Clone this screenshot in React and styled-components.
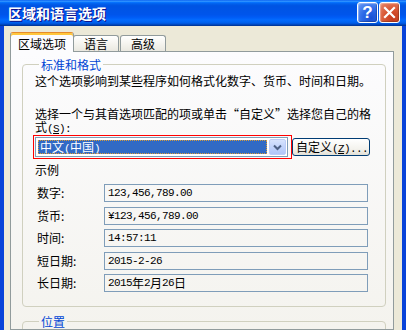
import React from "react";
import styled, { createGlobalStyle } from "styled-components";

const GlobalStyle = createGlobalStyle`
  html, body { margin: 0; padding: 0; background: #ECE9D8; }
  body {
    font-family: "Noto Sans CJK SC", "Noto Sans", sans-serif;
    font-size: 12px;
    color: #000;
  }
  #root { width: 406px; height: 330px; overflow: hidden; }
  * { box-sizing: border-box; }
`;

const Window = styled.div`
  width: 406px;
  height: 330px;
  display: flex;
  flex-direction: column;
  overflow: hidden;
`;

const TitleBar = styled.div`
  height: 26px;
  flex: none;
  display: flex;
  align-items: center;
  padding: 0 6px 0 8px;
  background: linear-gradient(
    180deg,
    #0058ee 0%,
    #3593ff 4%,
    #288eff 6%,
    #127dff 8%,
    #036ffc 10%,
    #0262ee 14%,
    #0057e5 20%,
    #0054e3 24%,
    #0055eb 56%,
    #005bf5 66%,
    #026afe 76%,
    #0062ef 86%,
    #0052d6 92%,
    #0040ab 96%,
    #003092 100%
  );
`;

const Title = styled.div`
  flex: 1;
  color: #fff;
  font-weight: bold;
  font-size: 14px;
  line-height: 16px;
  text-shadow: 1px 1px #0f1089;
`;

const Controls = styled.div`
  display: flex;
  gap: 1px;
  align-self: flex-start;
  margin-top: 2px;
`;

const CtrlButton = styled.div`
  width: 21px;
  height: 21px;
  border: 1px solid #fff;
  border-radius: 3px;
  display: flex;
  align-items: center;
  justify-content: center;
  color: #fff;
  font-family: "Liberation Sans", sans-serif;
  font-weight: bold;
  font-size: 17px;
  line-height: 1;
  background: ${(p) =>
    p.$close
      ? "radial-gradient(circle at 70% 80%, #c4391b 0%, #d85634 45%, #e88a6e 100%)"
      : "radial-gradient(circle at 70% 80%, #1a4fd3 0%, #2d6ae8 45%, #6d9ef5 100%)"};
  box-shadow: inset -1px -1px 1px rgba(0, 0, 0, 0.25),
    inset 1px 1px 1px rgba(255, 255, 255, 0.35);
`;

const Frame = styled.div`
  flex: 1;
  min-height: 0;
  display: flex;
  flex-direction: column;
  background: #ece9d8;
  border-left: 4px solid #0843d9;
  border-right: 4px solid #0843d9;
  padding: 6px 8px 0 6px;
`;

const TabStrip = styled.div`
  display: flex;
  align-items: flex-end;
  gap: 1px;
  height: 19px;
  position: relative;
  z-index: 1;
`;

const Tab = styled.div`
  height: ${(p) => (p.$active ? "20px" : "16px")};
  margin-bottom: ${(p) => (p.$active ? "-1px" : "0")};
  margin-right: ${(p) => (p.$active ? "-2px" : "0")};
  padding: ${(p) => (p.$active ? "4px 7px 0" : "1px 10px 0")};
  line-height: 14px;
  border: 1px solid #919b9c;
  border-bottom: none;
  border-radius: 3px 3px 0 0;
  white-space: nowrap;
  background: ${(p) =>
    p.$active ? "#fcfcfe" : "linear-gradient(180deg, #ffffff 0%, #f3f2ec 60%, #eae8e0 100%)"};
  ${(p) =>
    p.$active &&
    `border-top-color: #e68b2c; box-shadow: inset 0 2px 0 #ffc73c;`}
`;

const Panel = styled.div`
  flex: 1;
  min-height: 0;
  border: 1px solid #919b9c;
  background: linear-gradient(180deg, #fcfcfe 0%, #f4f3ee 100%);
  padding: 6px 7px 0 11px;
  overflow: hidden;
`;

const Group = styled.fieldset`
  margin: ${(p) => (p.$second ? "8px 0 0" : "0")};
  min-width: 0;
  border: 1px solid #d0d0bf;
  border-radius: 4px;
  padding: 3px 12px 14px 12px;
  ${(p) => p.$second && "height: 60px;"}
`;

const Legend = styled.legend`
  padding: 0 2px;
  margin-left: 4px;
  color: #0046d5;
  line-height: 13px;
`;

const Para = styled.div`
  line-height: ${(p) => (p.$tight ? "13px" : "14px")};
  margin-top: ${(p) => p.$mt || 0}px;
  white-space: nowrap;
`;

const Num = styled.span`
  font-family: "Liberation Mono", monospace;
  font-size: 11px;
  line-height: 1;
  letter-spacing: -0.6px;
`;

const Key = styled.span`
  text-decoration: underline;
`;

const ComboRow = styled.div`
  display: flex;
  align-items: center;
`;

const Highlight = styled.div`
  margin-left: -2px;
  border: 1px solid #f00;
  padding: 1px 3px 1px 1px;
`;

const Combo = styled.div`
  width: 253px;
  height: 20px;
  border: 1px solid #7f9db9;
  background: #fff;
  display: flex;
  align-items: center;
  padding: 1px;
  gap: 2px;
`;

const Selection = styled.div`
  flex: 1;
  height: 14px;
  margin-left: 1px;
  background: #316ac5;
  color: #fff;
  line-height: 13px;
  padding-left: 2px;
  outline: 1px dotted #d89c3a;
  outline-offset: -1px;
`;

const DropButton = styled.div`
  width: 17px;
  height: 16px;
  border: 1px solid #bccdf9;
  border-radius: 2px;
  background: linear-gradient(180deg, #d7e3fd 0%, #c1d3fb 50%, #b1c6f8 100%);
  display: flex;
  align-items: center;
  justify-content: center;
`;

const PushButton = styled.div`
  width: 78px;
  height: 18px;
  border: 1px solid #003c74;
  border-radius: 3px;
  background: linear-gradient(180deg, #ffffff 0%, #f4f3ee 60%, #e3e0d6 100%);
  line-height: 16px;
  padding-left: 3px;
  white-space: nowrap;
  overflow: hidden;
`;

const Rows = styled.div`
  margin-top: 7px;
  display: flex;
  flex-direction: column;
  gap: 4px;
  & > :nth-child(even) {
    margin-top: 1px;
  }
`;

const Row = styled.div`
  display: grid;
  grid-template-columns: 69px 264px;
  align-items: center;
`;

const Label = styled.div`
  padding-left: 2px;
  line-height: 14px;
`;

const ValueBox = styled.div`
  height: 18px;
  border: 1px solid #7f9db9;
  padding-left: 3px;
  display: flex;
  align-items: center;
  line-height: 14px;
  white-space: nowrap;
`;

const samples = [
  { label: "数字:", value: <Num>123,456,789.00</Num> },
  { label: "货币:", value: <Num>¥123,456,789.00</Num> },
  { label: "时间:", value: <Num>14:57:11</Num> },
  { label: "短日期:", value: <Num>2015-2-26</Num> },
  {
    label: "长日期:",
    value: (
      <>
        <Num>2015</Num>年<Num>2</Num>月<Num>26</Num>日
      </>
    ),
  },
];

export default function App() {
  return (
    <>
      <GlobalStyle />
      <Window>
        <TitleBar>
          <Title>区域和语言选项</Title>
          <Controls>
            <CtrlButton>?</CtrlButton>
            <CtrlButton $close>
              <svg width="13" height="13" viewBox="0 0 13 13">
                <path d="M2 2 L11 11 M11 2 L2 11" stroke="#fff" strokeWidth="2.2" strokeLinecap="square" />
              </svg>
            </CtrlButton>
          </Controls>
        </TitleBar>
        <Frame>
          <TabStrip>
            <Tab $active>区域选项</Tab>
            <Tab>语言</Tab>
            <Tab>高级</Tab>
          </TabStrip>
          <Panel>
            <Group>
              <Legend>标准和格式</Legend>
              <Para>这个选项影响到某些程序如何格式化数字、货币、时间和日期。</Para>
              <Para $tight $mt={19}>
                选择一个与其首选项匹配的项或单击“自定义”选择您自己的格
              </Para>
              <Para $tight>
                式<Num>(<Key>S</Key>):</Num>
              </Para>
              <ComboRow>
                <Highlight>
                  <Combo>
                    <Selection>
                      中文<Num>(</Num>中国<Num>)</Num>
                    </Selection>
                    <DropButton>
                      <svg width="9" height="7" viewBox="0 0 9 7">
                        <path d="M1 1.5 L4.5 5 L8 1.5" fill="none" stroke="#4d6185" strokeWidth="2" />
                      </svg>
                    </DropButton>
                  </Combo>
                </Highlight>
                <PushButton>
                  自定义<Num>(<Key>Z</Key>)...</Num>
                </PushButton>
              </ComboRow>
              <Para $mt={4}>示例</Para>
              <Rows>
                {samples.map((s) => (
                  <Row key={s.label}>
                    <Label>{s.label}</Label>
                    <ValueBox>{s.value}</ValueBox>
                  </Row>
                ))}
              </Rows>
            </Group>
            <Group $second>
              <Legend>位置</Legend>
            </Group>
          </Panel>
        </Frame>
      </Window>
    </>
  );
}
